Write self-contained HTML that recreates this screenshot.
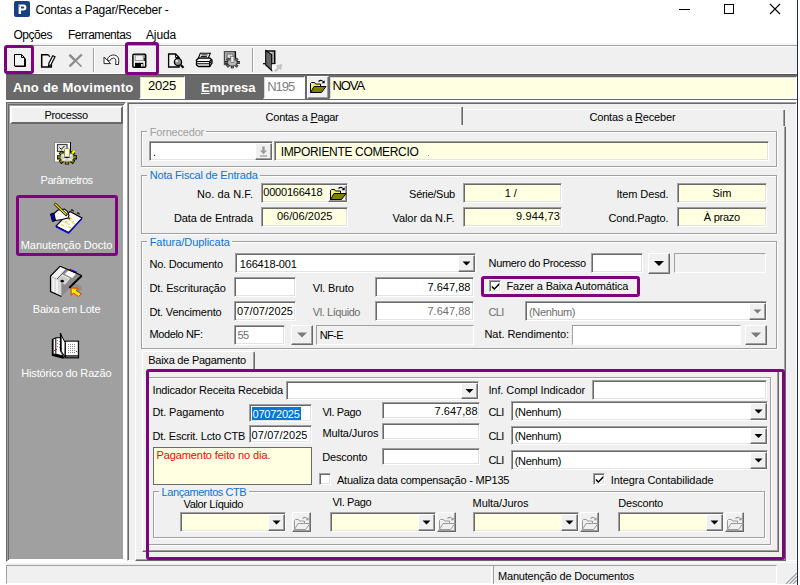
<!DOCTYPE html>
<html lang="pt-BR">
<head>
<meta charset="utf-8">
<title>Contas a Pagar/Receber</title>
<style>
html,body{margin:0;padding:0;background:#fff;}
body{width:800px;height:585px;overflow:hidden;font-family:"Liberation Sans",sans-serif;}
#win{position:relative;width:800px;height:585px;overflow:hidden;background:#fff;}
#win div, #win svg{position:absolute;box-sizing:border-box;}
.t{white-space:nowrap;}
.sk{border:1px solid;border-color:#a0a0a0 #fff #fff #a0a0a0;box-shadow:inset 1px 1px 0 #696969, inset -1px -1px 0 #e3e3e3;}
.grp{border:1px solid #a0a0a0;box-shadow:1px 1px 0 #fff, inset 1px 1px 0 #fff;}
.rbtn{background:#f0f0f0;border:1px solid;border-color:#fff #696969 #696969 #fff;box-shadow:inset -1px -1px 0 #a0a0a0;}
.pur{border:3px solid #800080;border-radius:3px;}
.cb{background:#fff;border:1px solid;border-color:#a0a0a0 #fff #fff #a0a0a0;box-shadow:inset 1px 1px 0 #696969, inset -1px -1px 0 #e3e3e3;}

</style>
</head>
<body>
<div id="win">
<svg style="left:14px;top:1px" width="16" height="16" viewBox="0 0 16 16"><rect x="0" y="0" width="16" height="16" rx="2" fill="#17417f"/><path d="M4.6 13V3.4h4.8a3 3 0 0 1 0 6H7V13z M7 5.4v2h2.2a1 1 0 0 0 0-2z" fill="#fff" fill-rule="evenodd"/><path d="M4 3l2.2 2.6-1 .6z" fill="#3aa0e8"/></svg>
<div class="t" style="top:2px;line-height:16px;font-size:12px;color:#000;letter-spacing:-0.27px;left:35.5px;">Contas a Pagar/Receber -</div>
<svg style="left:670px;top:0" width="127" height="22" viewBox="0 0 127 22"><path d="M9 9.5h11" stroke="#000" stroke-width="1"/><rect x="54.5" y="4.5" width="9" height="9" fill="none" stroke="#000" stroke-width="1"/><path d="M100 4l10 10M110 4l-10 10" stroke="#000" stroke-width="1.1"/></svg>
<div class="" style="left:797px;top:0px;width:1px;height:585px;background:#1b2b5c"></div>
<div class="t" style="top:27px;line-height:16px;font-size:12px;color:#000;letter-spacing:-0.48px;left:13.5px;">Opções</div>
<div class="t" style="top:27px;line-height:16px;font-size:12px;color:#000;letter-spacing:-0.46px;left:68px;">Ferramentas</div>
<div class="t" style="top:27px;line-height:16px;font-size:12px;color:#000;letter-spacing:-0.14px;left:146px;">Ajuda</div>
<div class="" style="left:6px;top:43px;width:791px;height:32px;background:#f0f0f0"></div>
<div class="" style="left:6px;top:43px;width:791px;height:2px;background:#f5f5f5"></div>
<div class="" style="left:6px;top:45px;width:791px;height:1px;background:#a0a0a0"></div>
<div class="" style="left:6px;top:46px;width:791px;height:1px;background:#fff"></div>
<div class="" style="left:93px;top:48px;width:1px;height:24px;background:#a0a0a0"></div>
<div class="" style="left:94px;top:48px;width:1px;height:24px;background:#fff"></div>
<div class="" style="left:252px;top:48px;width:1px;height:24px;background:#a0a0a0"></div>
<div class="" style="left:253px;top:48px;width:1px;height:24px;background:#fff"></div>
<svg style="left:6px;top:46px" width="290" height="28" viewBox="6 46 290 28">
<!-- new -->
<path d="M14.500 54.500h7l3 3v8.500h-10z" fill="#f4f4f4" stroke="#000" stroke-width="1"/><path d="M21.500 54.500v3h3" fill="none" stroke="#000" stroke-width="1"/><path d="M15 66.500h10.500v-8" fill="none" stroke="#000" stroke-width="1"/>
<!-- edit -->
<path d="M48.500 54.700H41.700V67H51.300V61.500" fill="#f4f4f4" stroke="#000" stroke-width="1.500"/>
<path d="M48.500 54.700l1.300 2.300" stroke="#000" stroke-width="1.200"/>
<path d="M52.800 55.800l2.200.9-4 8-2.500 1.600.4-3.100z" fill="#fff" stroke="#000" stroke-width="1.200"/>
<!-- delete X -->
<path d="M69.500 54.800l12 11.800" stroke="#8c8c8c" stroke-width="1.500" fill="none"/><path d="M69.500 54.800l5 5" stroke="#8c8c8c" stroke-width="2.400" fill="none"/><path d="M81.800 54.500l-12.300 11.800" stroke="#8c8c8c" stroke-width="2.300" fill="none"/>
<!-- undo -->
<path d="M107 59.500q2.500-5 7.500-4.500 5.500 1 4 9.500h-3q1.500-6-2-6.500-2.500 0-4 3z" fill="#fff" stroke="#2a2a2a" stroke-width="1"/>
<path d="M104 57v6.600h6.600z" fill="#fff" stroke="#2a2a2a" stroke-width="1"/>
<!-- save -->
<rect x="132.900" y="54.300" width="12.800" height="13" rx="1" fill="#f4f4f4" stroke="#000" stroke-width="1.500"/>
<rect x="135.200" y="55.200" width="8" height="5.300" fill="#f0f0f0" stroke="#8a8a8a" stroke-width=".9"/>
<path d="M144.300 55.500v1M144.300 57.500v3.500" stroke="#000" stroke-width="1"/>
<rect x="135" y="62.800" width="8.300" height="4.500" fill="#000"/>
<rect x="141" y="64" width="1.800" height="2.600" fill="#e0e0e0"/>
<!-- preview -->
<path d="M168.600 54h7l3.500 3.500v9.500h-10.500z" fill="#f4f4f4" stroke="#000" stroke-width="1.300"/><path d="M175.600 54v3.500h3.500" fill="none" stroke="#000" stroke-width="1"/>
<circle cx="178" cy="62" r="3.600" fill="#8f8f8f" stroke="#000" stroke-width="1.300"/><circle cx="176.800" cy="61" r="1.300" fill="#e8e8e8"/>
<path d="M180.800 65l2.700 2.800" stroke="#000" stroke-width="2.200"/>
<!-- print -->
<path d="M200.300 53.300h10l-2 4.900h-10z" fill="#f4f4f4" stroke="#000" stroke-width="1.100"/><path d="M201.500 54.900h6M200.800 56.500h6" stroke="#000" stroke-width=".9"/>
<path d="M196.500 60l2-1.800h11.500l2 1.800v3l-2.300 3.500h-11.200l-2-1.500z" fill="#f4f4f4" stroke="#000" stroke-width="1.300"/>
<path d="M197 61.500h12.500l2-2M197 63.800h12.500l2-2.500" fill="none" stroke="#000" stroke-width="1.100"/><path d="M209.500 61.500v4.500" stroke="#000" stroke-width="1"/>
<!-- gear doc (gray) -->
<rect x="224.400" y="51.600" width="11" height="13" fill="#b0b0b0" stroke="#4a4a4a" stroke-width="1.200"/><path d="M235.400 51.600v6" stroke="#000" stroke-width="1.300"/>
<rect x="227" y="54" width="6" height="4.500" fill="#d8d8d8" stroke="#666" stroke-width=".9"/>
<path d="M236.1 62.6L239.9 62.6M235.0 64.6L237.7 66.6M232.3 65.4L232.3 68.2M229.6 64.6L226.9 66.6M228.5 62.6L224.7 62.6M229.6 60.6L226.9 58.6M232.3 59.8L232.3 57.0M235.0 60.6L237.7 58.6" stroke="#1e1e1e" stroke-width="3" fill="none"/><path d="M236.1 62.6L239.9 62.6M235.0 64.6L237.7 66.6M232.3 65.4L232.3 68.2M229.6 64.6L226.9 66.6M228.5 62.6L224.7 62.6M229.6 60.6L226.9 58.6M232.3 59.8L232.3 57.0M235.0 60.6L237.7 58.6" stroke="#6a6a6a" stroke-width="1.400" fill="none"/><ellipse cx="232.3" cy="62.6" rx="4.600" ry="3.300" fill="#bcbcbc" stroke="#3a3a3a" stroke-width=".7"/><rect x="230.800" y="56.500" width="3.200" height="6" fill="#ececec" stroke="#555" stroke-width=".6"/>
<!-- exit door -->
<path d="M265.700 51h9v12.500" fill="none" stroke="#000" stroke-width="1.500"/>
<path d="M271.500 52h2.500v11h-2.500z" fill="#a8a8a8"/>
<path d="M265.700 50.500l6 4v16l-6-5.500z" fill="#646464" stroke="#000" stroke-width="1.100"/>
<path d="M263 63.700h3" stroke="#000" stroke-width="1.200"/><path d="M272 63.700h3.500" stroke="#000" stroke-width="1.200"/>
<rect x="271.800" y="64.500" width="4.500" height="5.500" fill="#fcfcfc"/>
<path d="M274.500 70.500l3.500-3.200-1.500-1.500 5.300-1.300-1 5.300-1.500-1.400-3.500 3.300z" fill="#c8c8c8" stroke="#b0b0b0" stroke-width=".5"/>
</svg>

<div class="" style="left:6px;top:73px;width:791px;height:1px;background:#fff"></div>
<div class="" style="left:6px;top:74px;width:791px;height:26px;background:#696969;border-top:1px solid #5a5a5a"></div>
<div class="t" style="top:79px;line-height:17px;font-size:13px;color:#fff;font-weight:bold;letter-spacing:0.26px;left:13px;">Ano de Movimento</div>
<div class="" style="left:139px;top:76px;width:46px;height:23px;background:#ffffe1;border:1px solid;border-color:#696969 #fff #fff #696969;box-shadow:inset 1px 1px 0 #d8d8d8, inset -1px -1px 0 #fff"></div>
<div class="t" style="top:77px;line-height:17px;font-size:13px;color:#000;letter-spacing:-0.23px;left:-38.1152px;width:400px;text-align:center;">2025</div>
<div class="t" style="top:79px;line-height:17px;font-size:13px;color:#fff;font-weight:bold;letter-spacing:-0.07px;left:201px;"><u>E</u>mpresa</div>
<div class="" style="left:263px;top:76px;width:42px;height:23px;background:#fff;border:1px solid;border-color:#696969 #fff #fff #696969;box-shadow:inset 1px 1px 0 #d8d8d8, inset -1px -1px 0 #fff"></div>
<div class="t" style="top:78px;line-height:17px;font-size:13px;color:#808080;letter-spacing:-1.02px;left:267.2px;">N195</div>
<div class="" style="left:307px;top:76px;width:21.5px;height:23px;background:#f0f0f0;border:1px solid;border-color:#fff #696969 #696969 #fff;box-shadow:inset -1px -1px 0 #a0a0a0"></div>
<svg style="left:310px;top:79px" width="17" height="15" viewBox="0 0 17 15"><path d="M.5 13.500v-9l1-1h3l1 1.500h5v2.500" fill="#f6f25a" stroke="#000" stroke-width="1"/><path d="M.5 13.500l3.500-6h12l-4.500 6z" fill="#808000" stroke="#000" stroke-width="1"/><path d="M8.500 2.500q3-2.500 5.500.8" fill="none" stroke="#000" stroke-width="1.100"/><path d="M14.600 1.200v3h-3z" fill="#000"/></svg>
<div class="" style="left:329px;top:76px;width:468px;height:23px;background:#ffffe1;border:1px solid;border-color:#696969 #fff #fff #696969;box-shadow:inset 1px 1px 0 #d8d8d8, inset -1px -1px 0 #fff"></div>
<div class="t" style="top:77px;line-height:17px;font-size:13px;color:#000;letter-spacing:-1.10px;left:332.5px;">NOVA</div>
<div class="" style="left:6px;top:100px;width:791px;height:3px;background:#fff"></div>
<div class="pur" style="left:4px;top:45px;width:30px;height:29px;"></div>
<div class="pur" style="left:125px;top:42px;width:34px;height:33px;"></div>
<div class="" style="left:6px;top:102px;width:791px;height:461px;background:#f0f0f0"></div>
<div class="" style="left:6px;top:102px;width:120px;height:460px;background:#a0a0a0;border:1px solid;border-color:#696969 #fff #fff #696969;box-shadow:inset 1px 1px 0 #a0a0a0, inset -1px -1px 0 #fff, inset 2px 2px 0 #696969, inset -2px -2px 0 #fff"></div>
<div class="" style="left:126px;top:102px;width:1px;height:460px;background:#fff"></div>
<div class="" style="left:10px;top:106px;width:113px;height:18px;background:#f0f0f0;border:2px solid;border-color:#fff #696969 #696969 #fff"></div>
<div class="t" style="top:108px;line-height:15px;font-size:11px;color:#000;letter-spacing:-0.29px;left:-133.847px;width:400px;text-align:center;">Processo</div>
<svg style="left:44px;top:136px" width="46" height="230" viewBox="44 136 46 230">
<!-- Parametros: document + gear -->
<rect x="54.500" y="142.500" width="16" height="19.500" fill="#fff" stroke="#8a8a8a" stroke-width="1"/>
<path d="M70.500 142v10.500" stroke="#000" stroke-width="1"/>
<rect x="57.500" y="144.500" width="9.500" height="7" fill="#e8e8e8" stroke="#444" stroke-width="1.200"/>
<path d="M59.500 147.500l1.800 1.800 3.200-3.300" fill="none" stroke="#000" stroke-width="1"/>
<path d="M72.5 157.3L77.0 157.3M70.9 160.1L74.1 162.5M67.0 161.3L67.0 164.6M63.1 160.1L59.9 162.5M61.5 157.3L57.0 157.3M63.1 154.5L59.9 152.1M67.0 153.3L67.0 150.0M70.9 154.5L74.1 152.1" stroke="#000" stroke-width="4.200" fill="none"/><path d="M72.5 157.3L76.3 157.3M70.9 160.1L73.6 162.0M67.0 161.3L67.0 163.9M63.1 160.1L60.4 162.0M61.5 157.3L57.7 157.3M63.1 154.5L60.4 152.6M67.0 153.3L67.0 150.7M70.9 154.5L73.6 152.6" stroke="#808000" stroke-width="2.600" fill="none"/><ellipse cx="67" cy="157.3" rx="6.800" ry="4.800" fill="#d0d0d0" stroke="#6b6b00" stroke-width=".8"/><path d="M61.500 154.500l4 2M72.500 154.500l-4 2M62 160.500l4-2M72 160.500l-4-2" stroke="#f4f4f4" stroke-width="1.200"/>
<rect x="64.600" y="148.600" width="4.800" height="8.600" rx="1" fill="#fff" stroke="#808000" stroke-width=".8"/>
<path d="M64.500 157.400h5" stroke="#000" stroke-width="1"/>
<path d="M71.500 152.500l2-2.500 1.500 1.500-2 2.500z" fill="#ffff00"/>
<!-- Manutencao: hand + notepad -->
<path d="M70 211.500l12 6.500-13.300 14.400-12.700-6.400z" fill="#fff" stroke="#000" stroke-width="1.100"/>
<path d="M56 226l12.700 6.400 13.300-14.400v1.500l-13.300 14.400-12.700-6.400z" fill="#0000ff"/>
<path d="M61 224.500l3 1.500M65 221l3 1.500M68 226.500l3 1.500M72 222.500l3 1.500M69 217.500l3 1.500" stroke="#f2e400" stroke-width="1.200"/>
<path d="M62 221l8 4M66 218l8 4" stroke="#c8c8c8" stroke-width=".8"/>
<path d="M71 210.500q1.500-1.500 2.500 1M77 213.500q1.500-1.500 2.500 1" fill="none" stroke="#000" stroke-width="1.200"/>
<path d="M50.500 214l3.500-1 1.500 7.500-3 1z" fill="#0000d0" stroke="#000" stroke-width="1"/>
<path d="M54 213.500l4-3.500 6.500-1 3 2.500 1.500 4-1 2.500-6 1.500-6.500 1z" fill="#fff" stroke="#000" stroke-width="1.100"/>
<path d="M54.500 203.500l12.500 12" stroke="#000" stroke-width="2.600"/><path d="M54.800 203.800l11.500 11" stroke="#ffe900" stroke-width="1.200"/>
<circle cx="69.200" cy="218.500" r=".9" fill="#a00000"/>
<!-- Baixa em Lote: 3D diskette + arrow -->
<ellipse cx="76" cy="288" rx="6" ry="4" fill="#8e8e8e"/>
<path d="M50.500 276l9.700-9.800 21.500 9.400-12.400 12z" fill="#8c8c8c"/>
<path d="M50.500 276l9.700-9.800 6.300 2.800-9.500 10z" fill="#f2f2f2"/>
<path d="M64.800 274l4.800-4.700 7.500 3.300-4.800 5.500z" fill="#fff"/>
<path d="M68.600 270.300l1.600-1.500 2 .9-1.600 1.500z" fill="#7a0000"/><path d="M70.900 271.300l1.600-1.500 4.900 2.200-1.600 1.500z" fill="#0000ff"/>
<path d="M55.500 280.300l5.800-5.800 8.200 4-5.200 6z" fill="#cdcdcd" stroke="#fafafa" stroke-width="1"/>
<ellipse cx="62.200" cy="281.200" rx="1.700" ry="1.400" fill="#000"/>
<path d="M50.500 276v15.500l11 5v-13.800z" fill="#d9d9d9"/>
<path d="M53.500 278.500v13.500M57 280.300v13.500" stroke="#f8f8f8" stroke-width="1.600"/>
<path d="M61.500 296.500l7.800-7.900v-1l-7.800-4.900z" fill="#8a8a8a"/>
<path d="M60.200 266.200l-9.700 9.800v15.500l11 5" fill="none" stroke="#000" stroke-width="1.200"/>
<path d="M60.200 266.200l21.500 9.400" fill="none" stroke="#000" stroke-width="1.100"/>
<path d="M81.700 275.800l-12.400 12" fill="none" stroke="#000" stroke-width="2"/>
<path d="M66.700 268.800l-9.800 10.300" fill="none" stroke="#555" stroke-width="1"/>
<path d="M71 288l7.200.3-2.200 2.200 5.300 3.400-2.800 2.600-5-3.500-2.200 2.400z" fill="#ffee00" stroke="#e8380c" stroke-width="1"/>
<!-- Historico: open book -->
<rect x="64.800" y="340.600" width="14.300" height="17.800" fill="#000"/>
<rect x="65.800" y="341.700" width="12" height="13.600" fill="#fff"/>
<path d="M66 356.800h12" stroke="#9a9a9a" stroke-width=".8"/>
<path d="M51.800 339.300l2.200-1.300 2-.8h4.500v13.800l4.300 7.500h-2.800l-10.200-2.700z" fill="#000"/>
<path d="M53.600 339.600l1.700-1v15.400l-1.700-.5z" fill="#fff"/>
<path d="M56.300 338.300h3.700v12.700l2.200 4.200-5.900-1.500z" fill="#fff"/>
<path d="M60.900 334.600l4.200 7.900-.2 14.600-3.700-6.300z" fill="#fff" stroke="#000" stroke-width="1"/>
<path d="M60.600 333v18" stroke="#000" stroke-width="1.400"/>
<g fill="#8a8a8a"><rect x="68" y="344" width="1" height="1"/><rect x="70" y="344" width="1" height="1"/><rect x="72" y="344" width="1" height="1"/><rect x="74" y="344" width="1" height="1"/>
<rect x="68" y="346" width="1" height="1"/><rect x="70" y="346" width="1" height="1"/><rect x="72" y="346" width="1" height="1"/><rect x="74" y="346" width="1" height="1"/>
<rect x="68" y="348" width="1" height="1"/><rect x="70" y="348" width="1" height="1"/><rect x="72" y="348" width="1" height="1"/><rect x="74" y="348" width="1" height="1"/>
<rect x="68" y="350" width="1" height="1"/><rect x="70" y="350" width="1" height="1"/><rect x="72" y="350" width="1" height="1"/><rect x="74" y="350" width="1" height="1"/>
<rect x="68" y="352" width="1" height="1"/><rect x="70" y="352" width="1" height="1"/><rect x="72" y="352" width="1" height="1"/><rect x="74" y="352" width="1" height="1"/>
<rect x="57" y="340" width="1" height="1"/><rect x="57" y="343" width="1" height="1"/><rect x="57" y="346" width="1" height="1"/><rect x="59" y="341" width="1" height="1"/><rect x="59" y="344" width="1" height="1"/><rect x="59" y="347" width="1" height="1"/></g>
<rect x="54" y="350" width="1" height="1" fill="#f00"/><rect x="56" y="349" width="1" height="1" fill="#f00"/><rect x="76" y="351" width="1" height="1" fill="#f00"/>
</svg>

<div class="t" style="top:173px;line-height:15px;font-size:11px;color:#fff;letter-spacing:-0.49px;left:-133.443px;width:400px;text-align:center;">Parâmetros</div>
<div class="t" style="top:238px;line-height:15px;font-size:11px;color:#fff;letter-spacing:-0.05px;left:-133.526px;width:400px;text-align:center;">Manutenção Docto</div>
<div class="t" style="top:302px;line-height:15px;font-size:11px;color:#fff;letter-spacing:-0.22px;left:-133.409px;width:400px;text-align:center;">Baixa em Lote</div>
<div class="t" style="top:366px;line-height:15px;font-size:11px;color:#fff;letter-spacing:-0.16px;left:-133.682px;width:400px;text-align:center;">Histórico do Razão</div>
<div class="pur" style="left:16px;top:195px;width:102px;height:61px;"></div>
<div class="" style="left:127px;top:102px;width:670px;height:459px;border:1px solid;border-color:#a0a0a0 #fff #fff #a0a0a0;box-shadow:inset 1px 1px 0 #696969"></div>
<div class="" style="left:135px;top:126px;width:651px;height:435px;border:1px solid;border-color:transparent #696969 #696969 #fff;box-shadow:inset -1px -1px 0 #a0a0a0"></div>
<div class="" style="left:135px;top:106.5px;width:327px;height:20px;border-top:1px solid #fff;border-left:1px solid #fff;border-radius:2px 0 0 0"></div>
<div class="" style="left:461px;top:107px;width:2px;height:18px;background:#696969;border-left:1px solid #a0a0a0"></div>
<div class="" style="left:463px;top:109px;width:321px;height:17px;border-top:1px solid #fff;"></div>
<div class="" style="left:783px;top:110px;width:2px;height:16px;background:#696969;border-left:1px solid #a0a0a0"></div>
<div class="t" style="top:110px;line-height:15px;font-size:11px;color:#000;letter-spacing:-0.25px;left:102.076px;width:400px;text-align:center;">Contas a <u>P</u>agar</div>
<div class="t" style="top:110px;line-height:15px;font-size:11px;color:#000;letter-spacing:-0.17px;left:432.416px;width:400px;text-align:center;">Contas a <u>R</u>eceber</div>
<div class="grp" style="left:141px;top:131px;width:636px;height:36px;"></div>
<div class="" style="left:147px;top:125px;width:59px;height:14px;background:#f0f0f0"></div>
<div class="t" style="top:125px;line-height:15px;font-size:11px;color:#a0a0a0;letter-spacing:-0.20px;left:149.8px;">Fornecedor</div>
<div class="sk" style="left:149px;top:141px;width:124px;height:20px;background:#fff;"></div>
<div class="t" style="top:145px;line-height:15px;font-size:11px;color:#000;left:153px;">.</div>
<div class="rbtn" style="left:255px;top:143px;width:17px;height:17px;"><svg style="left:1px;top:1px" width="13" height="14" viewBox="0 0 13 14"><path d="M5.300 1.500h2.400v4h2.300l-3.500 3.800-3.500-3.800h2.300z" fill="#9a9a9a"/><path d="M3 11h7" stroke="#9a9a9a" stroke-width="1.200"/></svg></div>
<div class="sk" style="left:274px;top:141px;width:495px;height:20px;background:#ffffe1;"></div>
<div class="t" style="top:144px;line-height:16px;font-size:12px;color:#000;letter-spacing:-0.33px;left:280.7px;">IMPORIENTE COMERCIO</div>
<div class="" style="left:428px;top:155px;width:1px;height:1px;background:#808080"></div>
<div class="grp" style="left:141px;top:175px;width:636px;height:59px;"></div>
<div class="" style="left:147px;top:168px;width:113px;height:14px;background:#f0f0f0"></div>
<div class="t" style="top:168px;line-height:15px;font-size:11px;color:#0a74d4;letter-spacing:-0.18px;left:149.7px;">Nota Fiscal de Entrada</div>
<div class="t" style="top:187px;line-height:15px;font-size:11px;color:#000;letter-spacing:0.09px;right:546.912px;">No. da N.F.</div>
<div class="sk" style="left:261px;top:183px;width:86.5px;height:20px;background:#ffffe1;"></div>
<div class="t" style="top:185px;line-height:15px;font-size:11px;color:#000;letter-spacing:-0.22px;left:263.3px;">0000166418</div>
<div class="" style="left:328px;top:184.5px;width:18.5px;height:17.5px;background:#f0f0f0;border:1px solid;border-color:#fff #696969 #696969 #fff;box-shadow:inset -1px -1px 0 #a0a0a0"></div>
<svg style="left:329.5px;top:186px" width="17" height="15" viewBox="0 0 17 15"><path d="M.5 13.500v-9l1-1h3l1 1.500h5v2.500" fill="#f6f25a" stroke="#000" stroke-width="1"/><path d="M.5 13.500l3.500-6h12l-4.500 6z" fill="#808000" stroke="#000" stroke-width="1"/><path d="M8.500 2.500q3-2.500 5.500.8" fill="none" stroke="#000" stroke-width="1.100"/><path d="M14.600 1.200v3h-3z" fill="#000"/></svg>
<div class="t" style="top:211px;line-height:15px;font-size:11px;color:#000;letter-spacing:-0.07px;right:547.075px;">Data de Entrada</div>
<div class="sk" style="left:261px;top:207px;width:86.5px;height:20px;background:#ffffe1;"></div>
<div class="t" style="top:209px;line-height:15px;font-size:11px;color:#000;letter-spacing:0.06px;left:104.732px;width:400px;text-align:center;">06/06/2025</div>
<div class="t" style="top:187px;line-height:15px;font-size:11px;color:#000;letter-spacing:-0.29px;right:345.19px;">Série/Sub</div>
<div class="sk" style="left:463px;top:183px;width:98.5px;height:20px;background:#ffffe1;"></div>
<div class="t" style="top:186px;line-height:15px;font-size:11px;color:#000;left:310.8px;width:400px;text-align:center;">1 /</div>
<div class="t" style="top:211px;line-height:15px;font-size:11px;color:#000;letter-spacing:-0.06px;right:345.56px;">Valor da N.F.</div>
<div class="sk" style="left:463px;top:207px;width:98.5px;height:20px;background:#ffffe1;"></div>
<div class="t" style="top:209px;line-height:15px;font-size:11px;color:#000;letter-spacing:0.15px;right:240.054px;">9.944,73</div>
<div class="t" style="top:187px;line-height:15px;font-size:11px;color:#000;letter-spacing:-0.11px;right:131.509px;">Item Desd.</div>
<div class="sk" style="left:677px;top:183px;width:90px;height:20px;background:#ffffe1;"></div>
<div class="t" style="top:186px;line-height:15px;font-size:11px;color:#000;left:522px;width:400px;text-align:center;">Sim</div>
<div class="t" style="top:211px;line-height:15px;font-size:11px;color:#000;letter-spacing:-0.10px;right:131.496px;">Cond.Pagto.</div>
<div class="sk" style="left:677px;top:207px;width:90px;height:20px;background:#ffffe1;"></div>
<div class="t" style="top:210px;line-height:15px;font-size:11px;color:#000;letter-spacing:-0.27px;left:521.863px;width:400px;text-align:center;">À prazo</div>
<div class="grp" style="left:141px;top:241px;width:636px;height:108px;"></div>
<div class="" style="left:147px;top:235px;width:85px;height:14px;background:#f0f0f0"></div>
<div class="t" style="top:235px;line-height:15px;font-size:11px;color:#0a74d4;letter-spacing:-0.04px;left:149.7px;">Fatura/Duplicata</div>
<div class="t" style="top:257px;line-height:15px;font-size:11px;color:#000;letter-spacing:-0.24px;left:149.5px;">No. Documento</div>
<div class="sk" style="left:235px;top:253px;width:241px;height:20px;background:#fff;"></div>
<div class="rbtn" style="left:458px;top:255px;width:17px;height:17px;"><svg style="left:-1px;top:-1px" width="17" height="17" viewBox="0 0 17 17"><path d="M4.5 6.5h8l-4 4z" fill="#000"/></svg></div>
<div class="t" style="top:257px;line-height:15px;font-size:11px;color:#000;letter-spacing:-0.18px;left:239.75px;">166418-001</div>
<div class="t" style="top:281px;line-height:15px;font-size:11px;color:#000;letter-spacing:-0.12px;left:149.5px;">Dt. Escrituração</div>
<div class="sk" style="left:234px;top:277px;width:62px;height:20px;background:#fff;"></div>
<div class="t" style="top:281px;line-height:15px;font-size:11px;color:#000;letter-spacing:-0.15px;left:312.8px;">Vl. Bruto</div>
<div class="sk" style="left:375px;top:277px;width:99px;height:20px;background:#fff;"></div>
<div class="t" style="top:280px;line-height:15px;font-size:11px;color:#000;letter-spacing:0.02px;right:329.579px;">7.647,88</div>
<div class="t" style="top:305px;line-height:15px;font-size:11px;color:#000;letter-spacing:-0.19px;left:149.5px;">Dt. Vencimento</div>
<div class="sk" style="left:234px;top:301px;width:62px;height:20px;background:#fff;"></div>
<div class="t" style="top:304px;line-height:15px;font-size:11px;color:#000;letter-spacing:0.09px;left:237.1px;">07/07/2025</div>
<div class="t" style="top:305px;line-height:15px;font-size:11px;color:#6d6d6d;letter-spacing:-0.43px;left:312.8px;">Vl. Líquido</div>
<div class="sk" style="left:375px;top:301px;width:99px;height:20px;background:#fff;"></div>
<div class="t" style="top:304px;line-height:15px;font-size:11px;color:#6d6d6d;letter-spacing:0.02px;right:329.579px;">7.647,88</div>
<div class="t" style="top:327px;line-height:15px;font-size:11px;color:#000;letter-spacing:-0.37px;left:149.5px;">Modelo NF:</div>
<div class="sk" style="left:234px;top:325px;width:51px;height:20px;background:#fff;"></div>
<div class="t" style="top:328px;line-height:15px;font-size:11px;color:#6d6d6d;letter-spacing:-0.67px;left:237.5px;">55</div>
<div class="rbtn" style="left:291px;top:325px;width:22px;height:20px;"><svg style="left:-1px;top:-1px" width="22" height="20" viewBox="0 0 22 20"><path d="M6 7.5h10l-5 5z" fill="#7a7a7a"/></svg></div>
<div class="" style="left:316px;top:325px;width:158px;height:20px;background:#f0f0f0;border:1px solid;border-color:#a0a0a0 #fff #fff #a0a0a0"></div>
<div class="t" style="top:328px;line-height:15px;font-size:11px;color:#000;letter-spacing:-0.62px;left:319.7px;">NF-E</div>
<div class="t" style="top:256px;line-height:15px;font-size:11px;color:#000;letter-spacing:-0.34px;left:488.6px;">Numero do Processo</div>
<div class="sk" style="left:591px;top:253px;width:52px;height:20px;background:#fff;"></div>
<div class="rbtn" style="left:648px;top:253px;width:22px;height:21px;"><svg style="left:-1px;top:-1px" width="22" height="21" viewBox="0 0 22 21"><path d="M6 8h10l-5 5z" fill="#000"/></svg></div>
<div class="" style="left:674px;top:253px;width:92px;height:20px;background:#f0f0f0;border:1px solid;border-color:#a0a0a0 #fff #fff #a0a0a0"></div>
<div class="cb" style="left:489px;top:280px;width:12px;height:12px;"><svg style="left:0;top:0" width="10" height="10" viewBox="0 0 10 10"><path d="M1.800 4.600L4.400 6.900 9.300 1.800V3.900L4.400 9 1.800 6.700z" fill="#000"/></svg></div>
<div class="t" style="top:279px;line-height:15px;font-size:11px;color:#000;letter-spacing:-0.15px;left:506.5px;">Fazer a Baixa Automática</div>
<div class="pur" style="left:481px;top:276px;width:159px;height:21px;"></div>
<div class="t" style="top:305px;line-height:15px;font-size:11px;color:#6d6d6d;letter-spacing:-0.68px;left:488.6px;">CLI</div>
<div class="sk" style="left:525px;top:301px;width:242px;height:20px;background:#fff;"></div>
<div class="rbtn" style="left:749px;top:303px;width:17px;height:17px;"><svg style="left:-1px;top:-1px" width="17" height="17" viewBox="0 0 17 17"><path d="M4.5 6.5h8l-4 4z" fill="#7a7a7a"/></svg></div>
<div class="t" style="top:305px;line-height:15px;font-size:11px;color:#6d6d6d;letter-spacing:-0.36px;left:529px;">(Nenhum)</div>
<div class="t" style="top:327px;line-height:15px;font-size:11px;color:#000;letter-spacing:-0.07px;left:484.5px;">Nat. Rendimento:</div>
<div class="" style="left:572px;top:325px;width:169px;height:20px;background:#fff;border:1px solid;border-color:#a0a0a0 #fff #fff #a0a0a0"></div>
<div class="rbtn" style="left:745px;top:325px;width:22px;height:20px;"><svg style="left:-1px;top:-1px" width="22" height="20" viewBox="0 0 22 20"><path d="M6 7.5h10l-5 5z" fill="#7a7a7a"/></svg></div>
<div class="" style="left:142px;top:369px;width:637px;height:183px;border:1px solid;border-color:#fff #696969 #696969 #fff;box-shadow:inset -1px -1px 0 #a0a0a0"></div>
<div class="" style="left:142px;top:351px;width:113px;height:19px;background:#f0f0f0;border:1px solid;border-color:#fff #696969 transparent #fff;box-shadow:inset -1px 0 0 #a0a0a0;border-radius:2px 2px 0 0"></div>
<div class="t" style="top:353px;line-height:15px;font-size:11px;color:#000;letter-spacing:-0.24px;left:148.2px;">Baixa de Pagamento</div>
<div class="grp" style="left:148px;top:377px;width:623px;height:168px;"></div>
<div class="t" style="top:383px;line-height:15px;font-size:11px;color:#000;letter-spacing:-0.18px;left:152.5px;">Indicador Receita Recebida</div>
<div class="sk" style="left:286px;top:381px;width:193px;height:19px;background:#fff;"></div>
<div class="rbtn" style="left:461px;top:383px;width:17px;height:16px;"><svg style="left:-1px;top:-1px" width="17" height="16" viewBox="0 0 17 16"><path d="M4.5 6h8l-4 4z" fill="#000"/></svg></div>
<div class="t" style="top:383px;line-height:15px;font-size:11px;color:#000;letter-spacing:-0.09px;left:488.4px;">Inf. Compl Indicador</div>
<div class="sk" style="left:592px;top:380px;width:175px;height:20px;background:#fff;"></div>
<div class="t" style="top:405px;line-height:15px;font-size:11px;color:#000;letter-spacing:-0.14px;left:152.5px;">Dt. Pagamento</div>
<div class="sk" style="left:249px;top:404px;width:63px;height:18px;background:#fff;"></div>
<div class="" style="left:252px;top:407px;width:49px;height:13px;background:#0078d7"></div>
<div class="t" style="top:407px;line-height:15px;font-size:11px;color:#fff;letter-spacing:-0.24px;left:252.6px;">07072025</div>
<div class="t" style="top:405px;line-height:15px;font-size:11px;color:#000;letter-spacing:-0.37px;left:322.4px;">Vl. Pago</div>
<div class="sk" style="left:382px;top:402px;width:98px;height:17px;background:#fff;"></div>
<div class="t" style="top:404px;line-height:15px;font-size:11px;color:#000;letter-spacing:0.02px;right:322.479px;">7.647,88</div>
<div class="t" style="top:405px;line-height:15px;font-size:11px;color:#000;letter-spacing:-0.57px;left:488.4px;">CLI</div>
<div class="sk" style="left:511px;top:401px;width:257px;height:20px;background:#fff;"></div>
<div class="rbtn" style="left:750px;top:403px;width:17px;height:17px;"><svg style="left:-1px;top:-1px" width="17" height="17" viewBox="0 0 17 17"><path d="M4.5 6.5h8l-4 4z" fill="#000"/></svg></div>
<div class="t" style="top:405px;line-height:15px;font-size:11px;color:#000;letter-spacing:-0.30px;left:514.7px;">(Nenhum)</div>
<div class="t" style="top:429px;line-height:15px;font-size:11px;color:#000;letter-spacing:-0.20px;left:152.5px;">Dt. Escrit. Lcto CTB</div>
<div class="sk" style="left:249px;top:425px;width:63px;height:18px;background:#fff;"></div>
<div class="t" style="top:428px;line-height:15px;font-size:11px;color:#000;letter-spacing:0.09px;left:251.6px;">07/07/2025</div>
<div class="t" style="top:426px;line-height:15px;font-size:11px;color:#000;letter-spacing:-0.08px;left:322.4px;">Multa/Juros</div>
<div class="sk" style="left:382px;top:423px;width:98px;height:17px;background:#fff;"></div>
<div class="t" style="top:429px;line-height:15px;font-size:11px;color:#000;letter-spacing:-0.57px;left:488.4px;">CLI</div>
<div class="sk" style="left:511px;top:426px;width:257px;height:19px;background:#fff;"></div>
<div class="rbtn" style="left:750px;top:428px;width:17px;height:16px;"><svg style="left:-1px;top:-1px" width="17" height="16" viewBox="0 0 17 16"><path d="M4.5 6h8l-4 4z" fill="#000"/></svg></div>
<div class="t" style="top:429px;line-height:15px;font-size:11px;color:#000;letter-spacing:-0.30px;left:514.7px;">(Nenhum)</div>
<div class="" style="left:153px;top:447px;width:159px;height:38px;background:#ffffe1;border:1px solid #696969"></div>
<div class="t" style="top:448px;line-height:15px;font-size:11px;color:#ff0000;letter-spacing:-0.10px;left:156.5px;">Pagamento feito no dia.</div>
<div class="t" style="top:450px;line-height:15px;font-size:11px;color:#000;letter-spacing:-0.19px;left:322.3px;">Desconto</div>
<div class="sk" style="left:382px;top:448px;width:98px;height:17px;background:#fff;"></div>
<div class="t" style="top:453px;line-height:15px;font-size:11px;color:#000;letter-spacing:-0.57px;left:488.4px;">CLI</div>
<div class="sk" style="left:511px;top:450px;width:257px;height:20px;background:#fff;"></div>
<div class="rbtn" style="left:750px;top:452px;width:17px;height:17px;"><svg style="left:-1px;top:-1px" width="17" height="17" viewBox="0 0 17 17"><path d="M4.5 6.5h8l-4 4z" fill="#000"/></svg></div>
<div class="t" style="top:454px;line-height:15px;font-size:11px;color:#000;letter-spacing:-0.30px;left:514.7px;">(Nenhum)</div>
<div class="cb" style="left:319px;top:473px;width:12px;height:12px;"></div>
<div class="t" style="top:473px;line-height:15px;font-size:11px;color:#000;letter-spacing:-0.23px;left:337px;">Atualiza data compensação - MP135</div>
<div class="cb" style="left:593px;top:473px;width:12px;height:12px;"><svg style="left:0;top:0" width="10" height="10" viewBox="0 0 10 10"><path d="M1.800 4.600L4.400 6.900 9.300 1.800V3.900L4.400 9 1.800 6.700z" fill="#000"/></svg></div>
<div class="t" style="top:473px;line-height:15px;font-size:11px;color:#000;letter-spacing:-0.09px;left:610.8px;">Integra Contabilidade</div>
<div class="grp" style="left:153px;top:491px;width:612px;height:47px;"></div>
<div class="" style="left:159px;top:485px;width:90px;height:13px;background:#f0f0f0"></div>
<div class="t" style="top:485px;line-height:15px;font-size:11px;color:#0a74d4;letter-spacing:-0.43px;left:161.6px;">Lançamentos CTB</div>
<div class="t" style="top:497px;line-height:15px;font-size:11px;color:#000;letter-spacing:-0.36px;left:183.6px;">Valor Líquido</div>
<div class="t" style="top:495px;line-height:15px;font-size:11px;color:#000;letter-spacing:-0.37px;left:332.6px;">Vl. Pago</div>
<div class="t" style="top:496px;line-height:15px;font-size:11px;color:#000;letter-spacing:-0.09px;left:472.6px;">Multa/Juros</div>
<div class="t" style="top:496px;line-height:15px;font-size:11px;color:#000;letter-spacing:-0.22px;left:618.3px;">Desconto</div>
<div class="sk" style="left:180px;top:512px;width:106px;height:20px;background:#ffffe1;"></div>
<div class="rbtn" style="left:268px;top:514px;width:17px;height:17px;"><svg style="left:-1px;top:-1px" width="17" height="17" viewBox="0 0 17 17"><path d="M4.5 6.5h8l-4 4z" fill="#000"/></svg></div>
<div class="" style="left:292px;top:512px;width:19px;height:20px;background:#f0f0f0;border:1px solid;border-color:#fff #696969 #696969 #fff;box-shadow:inset -1px -1px 0 #a0a0a0"></div>
<svg style="left:293.5px;top:515.5px" width="17" height="15" viewBox="0 0 17 15"><path d="M.5 13.500v-9l1-1h3l1 1.500h5v2.500" fill="#f0f0f0" stroke="#9a9a9a" stroke-width="1"/><path d="M.5 13.500l3.500-6h12l-4.500 6z" fill="#f0f0f0" stroke="#9a9a9a" stroke-width="1"/><path d="M8.500 2.500q3-2.500 5.500.8" fill="none" stroke="#9a9a9a" stroke-width="1.100"/><path d="M14.600 1.200v3h-3z" fill="#9a9a9a"/></svg>
<div class="sk" style="left:330px;top:512px;width:106px;height:20px;background:#ffffe1;"></div>
<div class="rbtn" style="left:418px;top:514px;width:17px;height:17px;"><svg style="left:-1px;top:-1px" width="17" height="17" viewBox="0 0 17 17"><path d="M4.5 6.5h8l-4 4z" fill="#000"/></svg></div>
<div class="" style="left:437px;top:512px;width:19px;height:20px;background:#f0f0f0;border:1px solid;border-color:#fff #696969 #696969 #fff;box-shadow:inset -1px -1px 0 #a0a0a0"></div>
<svg style="left:438.5px;top:515.5px" width="17" height="15" viewBox="0 0 17 15"><path d="M.5 13.500v-9l1-1h3l1 1.500h5v2.500" fill="#f0f0f0" stroke="#9a9a9a" stroke-width="1"/><path d="M.5 13.500l3.500-6h12l-4.500 6z" fill="#f0f0f0" stroke="#9a9a9a" stroke-width="1"/><path d="M8.500 2.500q3-2.500 5.500.8" fill="none" stroke="#9a9a9a" stroke-width="1.100"/><path d="M14.600 1.200v3h-3z" fill="#9a9a9a"/></svg>
<div class="sk" style="left:473px;top:512px;width:106px;height:20px;background:#ffffe1;"></div>
<div class="rbtn" style="left:561px;top:514px;width:17px;height:17px;"><svg style="left:-1px;top:-1px" width="17" height="17" viewBox="0 0 17 17"><path d="M4.5 6.5h8l-4 4z" fill="#000"/></svg></div>
<div class="" style="left:580px;top:512px;width:19px;height:20px;background:#f0f0f0;border:1px solid;border-color:#fff #696969 #696969 #fff;box-shadow:inset -1px -1px 0 #a0a0a0"></div>
<svg style="left:581.5px;top:515.5px" width="17" height="15" viewBox="0 0 17 15"><path d="M.5 13.500v-9l1-1h3l1 1.500h5v2.500" fill="#f0f0f0" stroke="#9a9a9a" stroke-width="1"/><path d="M.5 13.500l3.500-6h12l-4.500 6z" fill="#f0f0f0" stroke="#9a9a9a" stroke-width="1"/><path d="M8.500 2.500q3-2.500 5.500.8" fill="none" stroke="#9a9a9a" stroke-width="1.100"/><path d="M14.600 1.200v3h-3z" fill="#9a9a9a"/></svg>
<div class="sk" style="left:618px;top:512px;width:106px;height:20px;background:#ffffe1;"></div>
<div class="rbtn" style="left:706px;top:514px;width:17px;height:17px;"><svg style="left:-1px;top:-1px" width="17" height="17" viewBox="0 0 17 17"><path d="M4.5 6.5h8l-4 4z" fill="#000"/></svg></div>
<div class="" style="left:725px;top:512px;width:19px;height:20px;background:#f0f0f0;border:1px solid;border-color:#fff #696969 #696969 #fff;box-shadow:inset -1px -1px 0 #a0a0a0"></div>
<svg style="left:726.5px;top:515.5px" width="17" height="15" viewBox="0 0 17 15"><path d="M.5 13.500v-9l1-1h3l1 1.500h5v2.500" fill="#f0f0f0" stroke="#9a9a9a" stroke-width="1"/><path d="M.5 13.500l3.500-6h12l-4.500 6z" fill="#f0f0f0" stroke="#9a9a9a" stroke-width="1"/><path d="M8.500 2.500q3-2.500 5.500.8" fill="none" stroke="#9a9a9a" stroke-width="1.100"/><path d="M14.600 1.200v3h-3z" fill="#9a9a9a"/></svg>
<div class="pur" style="left:146px;top:369px;width:639px;height:191px;"></div>
<div class="" style="left:6px;top:562px;width:791px;height:1px;background:#fff"></div>
<div class="" style="left:6px;top:563px;width:791px;height:21px;background:#f0f0f0"></div>
<div class="" style="left:6px;top:565px;width:771px;height:19px;border:1px solid;border-color:#a0a0a0 #fff #fff #a0a0a0"></div>
<div class="" style="left:491px;top:566px;width:1px;height:18px;background:#fff"></div>
<div class="" style="left:493px;top:566px;width:1px;height:18px;background:#a0a0a0"></div>
<div class="t" style="top:569px;line-height:15px;font-size:11px;color:#000;letter-spacing:-0.19px;left:498px;">Manutenção de Documentos</div>
<svg style="left:785px;top:572px" width="12" height="12" viewBox="0 0 12 12"><path d="M1 12L12 1M4.500 12L12 4.500M8 12L12 8" stroke="#a0a0a0" stroke-width="1.100"/></svg>
</div>
</body>
</html>
